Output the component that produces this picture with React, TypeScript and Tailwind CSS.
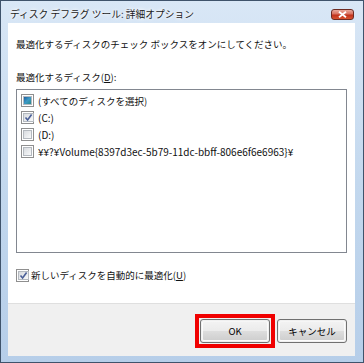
const font = "font-['Meiryo','Noto_Sans_CJK_JP',sans-serif]"

type State = 'on' | 'off' | 'mixed'

const Check = ({ state }: { state: State }) => (
  <span className="w-[13px] h-[13px] shrink-0 border border-[#8f8f8f] bg-white p-[1px] flex">
    <span className="flex-1 border border-[#b4b9bf] bg-gradient-to-br from-[#d8dbdf] to-[#f8f9fa] flex items-center justify-center">
      {state === 'mixed' && (
        <span className="w-[7px] h-[7px] bg-gradient-to-br from-[#1f5f9e] via-[#3d9ac6] to-[#2a8a8c]" />
      )}
      {state === 'on' && (
        <svg width="9" height="9" viewBox="0 0 9 9">
          <path d="M1.5 4.5 L3.6 7 L7.6 1.5" fill="none" stroke="#4a5f97" strokeWidth="1.6" />
        </svg>
      )}
    </span>
  </span>
)

const items: { label: string; state: State; latin?: boolean }[] = [
  { label: '(すべてのディスクを選択)', state: 'mixed' },
  { label: '(C:)', state: 'on', latin: true },
  { label: '(D:)', state: 'off', latin: true },
  { label: '¥¥?¥Volume{8397d3ec-5b79-11dc-bbff-806e6f6e6963}¥', state: 'off', latin: true },
]

const Button = ({ children }: { children: React.ReactNode }) => (
  <div className="w-[70px] h-[24px] rounded-[3px] border border-[#707070] p-[1px]">
    <div className="h-full rounded-[2px] border border-white/80 bg-[linear-gradient(#f2f2f2_0%,#ebebeb_48%,#dddddd_52%,#cfcfcf_100%)] flex items-center justify-center text-black">
      {children}
    </div>
  </div>
)

export default function App() {
  return (
    <div className={`${font} w-[364px] h-[363px] border border-[#3f536b] bg-gradient-to-b from-[#d9e7f6] via-[#c3d8ee] to-[#b6cee9] flex flex-col text-[9.5px] text-[#111]`}>
      <div className="h-[22px] flex items-start justify-between pl-[9px] pr-[9px]">
        <span className="mt-[5px] leading-[16px] text-[9.75px] text-[#1a1a1a] [text-shadow:0_0_5px_white,0_0_3px_white]">
          ディスク デフラグ ツール: 詳細オプション
        </span>
        <span className="mt-[8px] w-[23px] h-[11px] rounded-[3px] border border-[#6d2b22] bg-[linear-gradient(#e9a99c_0%,#d9705e_45%,#c0321c_55%,#d8522f_100%)] flex items-center justify-center">
          <svg width="9" height="7" viewBox="0 0 9 7">
            <path d="M1 0.8 L8 6.2 M8 0.8 L1 6.2" stroke="white" strokeWidth="1.8" />
          </svg>
        </span>
      </div>

      <div className="ml-[7px] w-[347px] h-[333px] flex flex-col">
        <div className="h-[280px] bg-white flex flex-col">
          <div className="mt-[13px] ml-[8px] leading-[16px]">
            最適化するディスクのチェック ボックスをオンにしてください。
          </div>
          <div className="mt-[17px] ml-[8px] leading-[16px]">
            最適化するディスク(<span className="underline">D</span>):
          </div>
          <div className="mt-[4px] ml-[8px] w-[331px] h-[164px] border border-[#828790] pt-[2px] pl-[4px]">
            {items.map((item) => (
              <div key={item.label} className="h-[17px] flex items-center gap-[4px]">
                <Check state={item.state} />
                <span className={`leading-[16px] whitespace-nowrap ${item.latin ? 'text-[10px]' : ''}`}>
                  {item.label}
                </span>
              </div>
            ))}
          </div>
          <div className="mt-[14px] ml-[8px] h-[16px] flex items-center gap-[2px]">
            <Check state="on" />
            <span className="leading-[16px]">
              新しいディスクを自動的に最適化(<span className="underline">U</span>)
            </span>
          </div>
        </div>
        <div className="flex-1 bg-[#f0f0f0] border-t border-[#dfdfdf] flex items-start justify-end gap-[7px] pr-[8px] pt-[15px]">
          <div className="relative">
            <Button>OK</Button>
            <div className="absolute -inset-[5px] border-4 border-[#f00000]" />
          </div>
          <Button>キャンセル</Button>
        </div>
      </div>
    </div>
  )
}
